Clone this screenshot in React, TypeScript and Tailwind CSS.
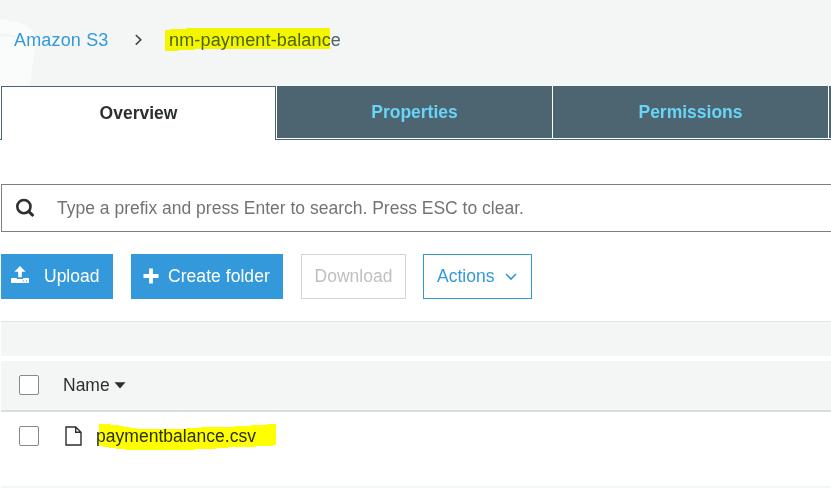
import type { ReactNode } from "react";

function Label({ children, className = "" }: { children: ReactNode; className?: string }) {
  return <span className={`whitespace-nowrap ${className}`}>{children}</span>;
}

function Breadcrumb() {
  return (
    <header className="relative flex h-[86px] items-start bg-[#f4f6f6] pl-[14px] pt-[28px] leading-6">
      <svg className="absolute left-0 top-0" width="40" height="86" viewBox="0 0 40 86">
        <path d="M0 19C17 21 32 25 36 37L30 86H0Z" fill="#fafcfb" />
        <path d="M0 33Q14 34 28 39L29 42Q15 36 0 37Z" fill="#f4f6f6" />
      </svg>
      <Label className="relative w-[120px] text-[18px] tracking-[0.16px] text-[#3399da]">Amazon S3</Label>
      <svg className="mt-[6px] shrink-0" width="9" height="12" viewBox="0 0 9 12" fill="none" stroke="#414750" strokeWidth="1.6">
        <path d="M1.8 1L6.8 5.8L1.8 10.6" />
      </svg>
      <span className="relative ml-[26px] text-[18px] tracking-[0.16px] text-[#4d6471]">
        <Label>nm-payment-balance</Label>
        <svg className="absolute -left-1 -top-px mix-blend-multiply" width="166" height="26" viewBox="0 0 166 26">
          <path d="M0 3H5V2H21V1H165V22H29V23H13V24H0Z" fill="#ffff00" />
        </svg>
      </span>
    </header>
  );
}

function Tab({ children }: { children?: ReactNode }) {
  return (
    <div className="box-content flex h-[52px] w-[275px] shrink-0 items-center justify-center border-r border-white bg-[#4d6471] text-[#68d4f7]">
      <Label>{children}</Label>
    </div>
  );
}

function Tabs() {
  return (
    <nav className="flex h-[54px] overflow-hidden text-[17.5px] font-bold">
      <div className="w-px shrink-0 border-b border-[#4d6471]" />
      <div className="flex w-[275px] shrink-0 items-center justify-center border border-b-0 border-[#4d6471] bg-white text-[#2b2f30]">
        <Label>Overview</Label>
      </div>
      <div className="flex min-w-0 grow border-b border-[#4d6471] pl-px">
        <Tab>Properties</Tab>
        <Tab>Permissions</Tab>
        <Tab />
      </div>
    </nav>
  );
}

function SearchBar() {
  return (
    <div className="ml-px mt-[44px] flex h-12 items-center border border-r-0 border-[#7b7f80] pl-[13px]">
      <svg className="shrink-0" width="21" height="21" viewBox="0 0 21 21" fill="none" stroke="#2b2f30">
        <circle cx="8.9" cy="8.6" r="6.6" strokeWidth="2.6" />
        <path d="M13.4 13.1L18.4 18" strokeWidth="3" />
      </svg>
      <Label className="ml-[21px] text-[17.5px] text-[#707475]">
        Type a prefix and press Enter to search. Press ESC to clear.
      </Label>
    </div>
  );
}

function Toolbar() {
  return (
    <div className="ml-px mt-[22px] flex h-[45px] text-[17.5px]">
      <button className="mr-[18px] flex w-[112px] items-center bg-[#3399da] pl-[10px] text-white">
        <svg className="-mt-[3px]" width="18" height="18" viewBox="0 0 18 18" fill="white">
          <path d="M9 0L14.6 5.8H10.8V11.3H7.2V5.8H3.4Z" />
          <path d="M0.8 12H5.8V13H12.2V12H17.2Q18 12 18 12.8V16.2Q18 17 17.2 17H0.8Q0 17 0 16.2V12.8Q0 12 0.8 12Z" />
          <path d="M11.8 14.4H13.2V15.6H11.8ZM14.8 14.4H16.2V15.6H14.8Z" fill="#3399da" />
        </svg>
        <Label className="ml-[15px]">Upload</Label>
      </button>
      <button className="mr-[18px] flex w-[152px] items-center bg-[#3399da] pl-[12px] text-white">
        <svg className="-mt-[2px]" width="16" height="16" viewBox="0 0 16 16" stroke="white" strokeWidth="3.8">
          <path d="M8 0.5V15.5M0.5 8H15.5" />
        </svg>
        <Label className="ml-[9px] tracking-[0.05px]">Create folder</Label>
      </button>
      <button className="mr-[17px] flex w-[105px] items-center justify-center border border-[#d2d5d5] text-[#bec1c2]">
        <Label>Download</Label>
      </button>
      <button className="flex w-[109px] items-center border border-[#3399cc] pl-[13px] text-[#3399da]">
        <Label>Actions</Label>
        <svg className="ml-[11px]" width="12" height="8" viewBox="0 0 12 8" fill="none" stroke="#3399da" strokeWidth="1.6">
          <path d="M1 1L6 6L11 1" />
        </svg>
      </button>
    </div>
  );
}

function Checkbox({ className = "" }: { className?: string }) {
  return <span className={`h-5 w-5 shrink-0 rounded-[2px] border border-[#858b8c] bg-white ${className}`} />;
}

function ObjectTable() {
  return (
    <section className="ml-px mt-[22px] text-[17.5px] text-[#2b2f30]">
      <div className="h-[35px] border-t border-[#e0e4e4] bg-[#f4f6f6]" />
      <div className="mt-[5px] flex h-[51px] items-center border-b-2 border-[#dadddd] bg-[#f4f6f6] pl-[18px]">
        <Checkbox className="-mt-px" />
        <Label className="ml-6">Name</Label>
        <svg className="ml-[4px]" width="12" height="7" viewBox="0 0 12 7" fill="#2b2f30">
          <path d="M0.5 0.3H11.5L6 6.5Z" />
        </svg>
      </div>
      <div className="flex h-[76px] items-start border-b-2 border-[#f4f5f5] pl-[18px] pt-[14px]">
        <Checkbox />
        <svg className="ml-[26px] shrink-0" width="17" height="20" viewBox="0 0 17 20" fill="none" stroke="#2b2f30" strokeWidth="1.4">
          <path d="M1 1H10.7L16 6.3V19H1ZM10.7 1V6.3H16" />
        </svg>
        <span className="relative ml-[14px] leading-5">
          <Label className="tracking-[0.03px]">paymentbalance.csv</Label>
          <svg className="absolute left-[3px] -top-[2px] mix-blend-multiply" width="178" height="27" viewBox="0 0 178 27">
            <path d="M0 0H12V1H20V2H25V3H31V4H37V5H87V4H102V3H136V2H152V1H168V0H177V21H174V22H157V23H129V24H117V25H96V26H26V25H17V24H10V23H4V22H0Z" fill="#ffff00" />
          </svg>
        </span>
      </div>
    </section>
  );
}

export default function App() {
  return (
    <main className="h-[488px] w-[831px] overflow-hidden bg-white font-['Liberation_Sans',Arial,sans-serif]">
      <Breadcrumb />
      <Tabs />
      <SearchBar />
      <Toolbar />
      <ObjectTable />
    </main>
  );
}
